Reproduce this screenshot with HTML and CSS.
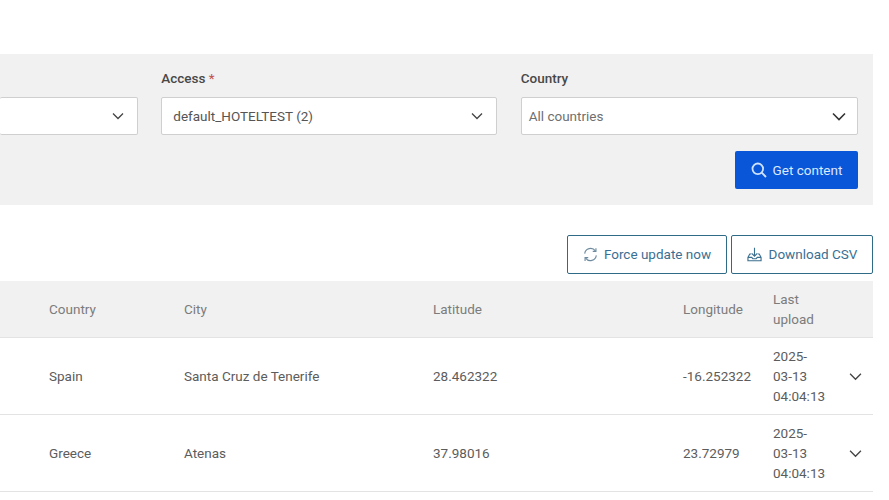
FILE: index.html
```html
<!DOCTYPE html>
<html lang="en">
<head>
<meta charset="utf-8">
<title>Content</title>
<link rel="stylesheet" href="styles.css">
</head>
<body>
<div class="page">
  <section class="filters">
    <div class="fields">
      <div class="field">
        <div class="label">&nbsp;</div>
        <div class="select select-clipped">
          <span></span>
          <svg class="chev" viewBox="0 0 12 8"><path d="M1 1.5 6 6.5 11 1.5"/></svg>
        </div>
      </div>
      <div class="field">
        <div class="label">Access <span class="req">*</span></div>
        <div class="select">
          <span>default_HOTELTEST (2)</span>
          <svg class="chev" viewBox="0 0 12 8"><path d="M1 1.5 6 6.5 11 1.5"/></svg>
        </div>
      </div>
      <div class="field">
        <div class="label">Country</div>
        <div class="select select-plain">
          <span>All countries</span>
          <svg class="chev chev-large" viewBox="0 0 14 9"><path d="M1 1.5 7 7.5 13 1.5"/></svg>
        </div>
      </div>
    </div>
    <div class="submit-row">
      <button class="btn-primary" type="button">
        <svg class="ico-search" viewBox="0 0 16 16"><circle cx="6.8" cy="6.8" r="5.3"/><path d="M10.7 10.7 15 15"/></svg>
        Get content
      </button>
    </div>
  </section>

  <div class="actions">
    <button class="btn-outline" type="button">
      <svg class="ico ico-refresh" viewBox="0 0 16 16"><path d="M1.8 7A6.3 6.3 0 0 1 13.2 4.2M14.2 9A6.3 6.3 0 0 1 2.8 11.8"/><path d="M13.8 1.2v3.4h-3.4M2.2 14.8v-3.4h3.4"/></svg>
      Force update now
    </button>
    <button class="btn-outline btn-csv" type="button">
      <svg class="ico" viewBox="0 0 16 16"><path d="M8 .8v9M5 6.8l3 3 3-3"/><path d="M4.5 7.500H3L1 11v3.700h14V11l-2-3.500h-1.500M1 11h4l1.200 1.500h3.600L11 11h4"/></svg>
      Download CSV
    </button>
  </div>

  <div class="table">
    <div class="row head">
      <div></div><div>Country</div><div>City</div><div>Latitude</div><div>Longitude</div><div>Last<br>upload</div><div></div>
    </div>
    <div class="row">
      <div></div><div>Spain</div><div>Santa Cruz de Tenerife</div><div>28.462322</div><div>-16.252322</div><div>2025-<br>03-13<br>04:04:13</div>
      <div class="cell-chev"><svg class="chev chev-row" viewBox="0 0 12 8"><path d="M1 1.5 6 6.5 11 1.5"/></svg></div>
    </div>
    <div class="row">
      <div></div><div>Greece</div><div>Atenas</div><div>37.98016</div><div>23.72979</div><div>2025-<br>03-13<br>04:04:13</div>
      <div class="cell-chev"><svg class="chev chev-row" viewBox="0 0 12 8"><path d="M1 1.5 6 6.5 11 1.5"/></svg></div>
    </div>
  </div>
</div>
</body>
</html>
```

FILE: styles.css
```css
* { box-sizing: border-box; }
html, body { margin: 0; background: #fff; overflow: hidden; }
body { font-family: Roboto, "Liberation Sans", sans-serif; font-size: 13.5px; color: #4a4a4a; }
.page { width: 873px; padding-top: 54px; }

.filters { background: #f1f1f1; height: 151px; padding: 16px 0 0 0; }
.fields { display: grid; grid-template-columns: 137.7px 335.8px 337px; column-gap: 23.6px; }
.label { height: 27px; line-height: 17px; font-weight: 500; color: #484848; }
.req { color: #c0504d; font-weight: 400; }
.select {
  height: 38px; background: #fff; border: 1px solid #cfcfcf; border-radius: 2px;
  display: flex; align-items: center; justify-content: space-between;
  padding: 0 13px 0 11px; color: #555;
}
.select-clipped { border-left: 0; }
.select-plain { padding: 0 11px 0 7px; color: #6f6f6f; }
.chev { width: 12px; height: 8px; fill: none; stroke: #444; stroke-width: 1.3; }
.chev-large { width: 14px; height: 9px; stroke: #333; stroke-width: 1.6; }
.chev-row { width: 13px; height: 9px; stroke-width: 1.2; }

.submit-row { display: flex; justify-content: flex-end; margin-top: 16px; padding-right: 15px; }
.btn-primary {
  width: 123px; height: 38px; border: 0; border-radius: 2px; background: #0a56d8; color: #dce9ff;
  font: 400 13.5px Roboto, sans-serif; display: flex; align-items: center; justify-content: center; gap: 6px;
}
.ico-search { width: 16px; height: 16px; fill: none; stroke: #cfe2ff; stroke-width: 1.8; }

.actions { display: flex; justify-content: flex-end; gap: 4px; margin-top: 30px; }
.btn-outline {
  width: 160px; height: 39px; background: #fff; border: 1px solid #2f6a86; border-radius: 2px; color: #3a6f94;
  font: 400 13.5px Roboto, sans-serif; display: flex; align-items: center; justify-content: center; gap: 6px;
  padding-bottom: 2px;
}
.btn-csv { width: 142px; gap: 7px; }
.ico { width: 15px; height: 15px; fill: none; stroke-width: 1.2; stroke: #3b6f8f; }
.ico-refresh { stroke: #6d8a9e; }

.table { margin-top: 7px; }
.row {
  display: grid; grid-template-columns: 49px 135px 249px 250px 90px 53px 1fr;
  align-items: center; height: 77px; line-height: 20px; border-bottom: 1px solid #e3e3e3; color: #5c5c5c;
}
.head { height: 57px; background: #f1f1f1; color: #7c7c7c; }
.cell-chev { display: flex; padding-left: 23px; }
```
